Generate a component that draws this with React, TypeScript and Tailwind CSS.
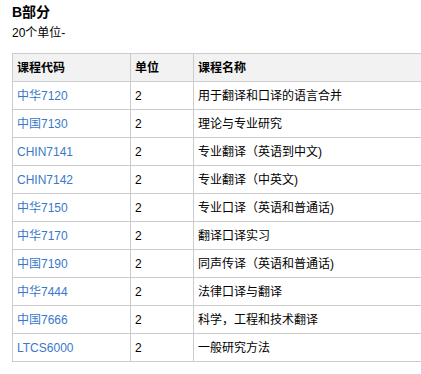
const ROWS: [string, string, string][] = [
  ['中华7120', '2', '用于翻译和口译的语言合并'],
  ['中国7130', '2', '理论与专业研究'],
  ['CHIN7141', '2', '专业翻译（英语到中文)'],
  ['CHIN7142', '2', '专业翻译（中英文)'],
  ['中华7150', '2', '专业口译（英语和普通话)'],
  ['中华7170', '2', '翻译口译实习'],
  ['中国7190', '2', '同声传译（英语和普通话)'],
  ['中华7444', '2', '法律口译与翻译'],
  ['中国7666', '2', '科学，工程和技术翻译'],
  ['LTCS6000', '2', '一般研究方法'],
]

export default function App() {
  return (
    <div
      className="w-[421px] h-[374px] overflow-hidden bg-white pl-3 pt-[3px] text-[12px] text-black"
      style={{ fontFamily: '"Liberation Sans", Arial, "Noto Sans CJK SC", sans-serif' }}
    >
      <h2 className="text-[14px] font-bold leading-[18px]">B部分</h2>
      <p className="mt-[4px] leading-[16px]">20个单位-</p>
      <table className="mt-[12px] w-[440px] border-collapse">
        <thead>
          <tr className="bg-[#f2f2f2]">
            <th className="h-[28px] w-[118px] border border-[#cccccc] px-[4px] text-left font-bold">课程代码</th>
            <th className="h-[28px] w-[63px] border border-[#cccccc] px-[4px] text-left font-bold">单位</th>
            <th className="h-[28px] border border-[#cccccc] px-[4px] text-left font-bold">课程名称</th>
          </tr>
        </thead>
        <tbody>
          {ROWS.map(([code, units, name]) => (
            <tr key={code}>
              <td className="h-[28px] border border-[#cccccc] px-[4px] text-[#3a78c9]">{code}</td>
              <td className="h-[28px] border border-[#cccccc] px-[4px]">{units}</td>
              <td className="h-[28px] border border-[#cccccc] px-[4px]">{name}</td>
            </tr>
          ))}
        </tbody>
      </table>
    </div>
  )
}
